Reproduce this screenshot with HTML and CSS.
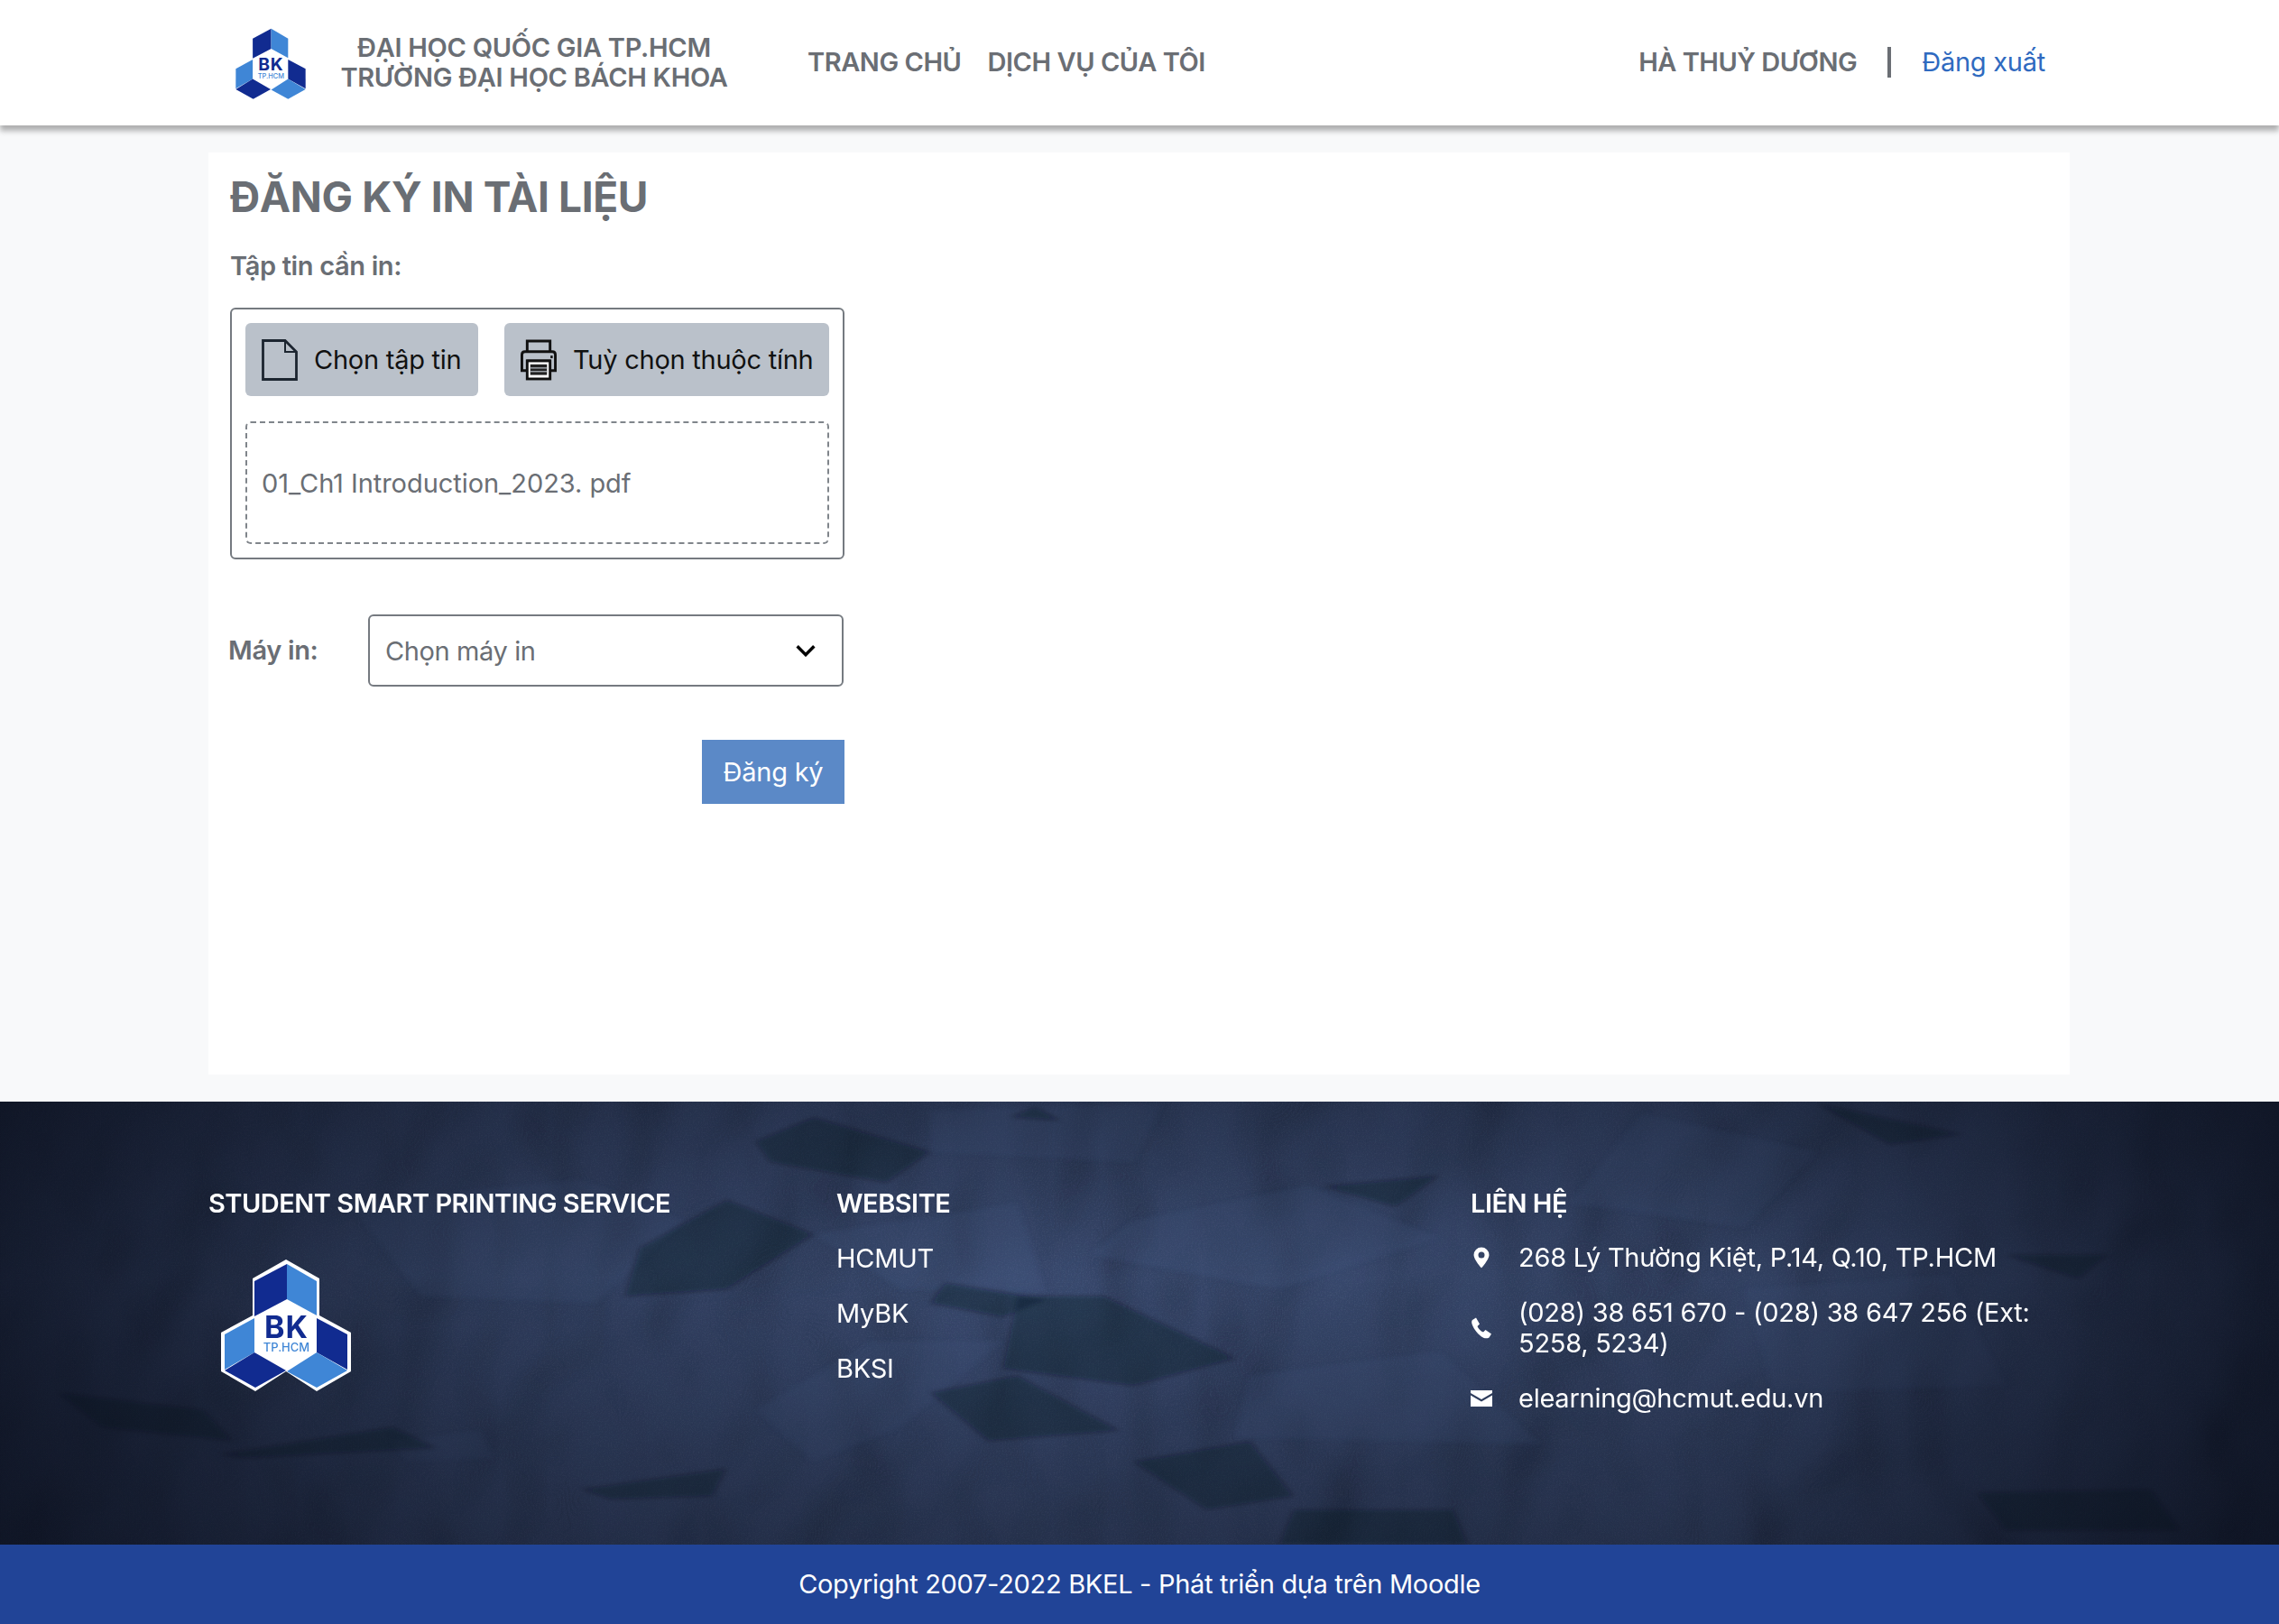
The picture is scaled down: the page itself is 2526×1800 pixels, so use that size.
FILE: index.html
```html
<!DOCTYPE html>
<html lang="vi">
<head>
    <meta charset="UTF-8">
    <meta name="viewport" content="width=device-width, initial-scale=1.0">
    <title>Đăng ký in tài liệu</title>
    <link rel="stylesheet" href="styles.css">
</head>
<body>
    <svg class="svg-defs" width="0" height="0">
        <defs>
            <symbol id="bk-logo" viewBox="0 0 144 146">
                <polygon points="72,0 109,21 109,62 144,81 144,124 106,146 72,124 38,146 0,124 0,81 35,62 35,21" fill="#fff"/>
                <polygon points="73,5 73,44 37,63 37,24" fill="#112b90"/>
                <polygon points="73,5 106,24 106,62 73,44" fill="#3f86d6"/>
                <polygon points="37,65 37,103 4,122 4,83" fill="#3f86d6"/>
                <polygon points="106,65 140,83 140,122 106,103" fill="#112b90"/>
                <polygon points="37,103 72,123 38,142 4,123" fill="#112b90"/>
                <polygon points="106,103 140,123 106,142 73,124" fill="#3f86d6"/>
                <text x="72.500" y="87" class="logo-bk" text-anchor="middle">BK</text>
                <text x="72.500" y="102" class="logo-city" text-anchor="middle">TP.HCM</text>
            </symbol>
        </defs>
    </svg>

    <header class="site-header">
        <div class="brand">
            <svg class="brand-logo"><use href="#bk-logo"/></svg>
            <div class="brand-name">ĐẠI HỌC QUỐC GIA TP.HCM<br>TRƯỜNG ĐẠI HỌC BÁCH KHOA</div>
        </div>
        <nav class="main-nav">
            <a>TRANG CHỦ</a>
            <a>DỊCH VỤ CỦA TÔI</a>
        </nav>
        <div class="user-box">
            <span class="user-name">HÀ THUỶ DƯƠNG</span>
            <span class="user-sep"></span>
            <a class="logout">Đăng xuất</a>
        </div>
    </header>

    <main class="page">
        <section class="card">
            <h1>ĐĂNG KÝ IN TÀI LIỆU</h1>
            <div class="field-label">Tập tin cần in:</div>
            <div class="file-box">
                <div class="file-actions">
                    <button class="tool-btn btn-file">
                        <svg class="tool-icon" viewBox="0 0 40 46" fill="none" stroke="#1c2530" stroke-width="2.800">
                            <path d="M1.500 1.500H26L38.500 14V44.500H1.500Z"/>
                            <path d="M26 1.500V14H38.500" stroke-width="2"/>
                        </svg>
                        Chọn tập tin
                    </button>
                    <button class="tool-btn btn-props">
                        <svg class="tool-icon" viewBox="0 0 41 46">
                            <path d="M7.500 13V1.500H33.500V13" fill="none" stroke="#111" stroke-width="3"/>
                            <path d="M5 13.500H36Q39.500 13.500 39.500 17V35H33V24H8V35H1.500V17Q1.500 13.500 5 13.500Z" fill="none" stroke="#111" stroke-width="3"/>
                            <rect x="7.500" y="24" width="26" height="20.500" fill="#fff" stroke="#111" stroke-width="3"/>
                            <rect x="11" y="28" width="19" height="12" fill="#222"/>
                            <rect x="11" y="31.500" width="19" height="1.200" fill="#bac1ca"/>
                            <rect x="11" y="35.500" width="19" height="1.200" fill="#bac1ca"/>
                            <rect x="34" y="18" width="2.500" height="3" fill="#111"/>
                        </svg>
                        Tuỳ chọn thuộc tính
                    </button>
                </div>
                <div class="file-list">01_Ch1 Introduction_2023. pdf</div>
            </div>
            <div class="printer-row">
                <label class="field-label">Máy in:</label>
                <div class="select-box">
                    <span>Chọn máy in</span>
                    <svg class="select-arrow" viewBox="0 0 20 12" fill="none" stroke="#000" stroke-width="3"><path d="M2 2l8 8 8-8"/></svg>
                </div>
            </div>
            <div class="submit-row">
                <button class="submit-btn">Đăng ký</button>
            </div>
        </section>
    </main>

    <footer class="site-footer">
        <!-- crumpled paper: lit noise, then hand placed facets on top -->
        <svg class="paper" width="2526" height="491">
            <filter id="crumple" x="0" y="0" width="100%" height="100%">
                <feTurbulence type="fractalNoise" baseFrequency="0.0045 0.004" numOctaves="3" seed="8"/>
                <feDiffuseLighting surfaceScale="34" diffuseConstant="1" lighting-color="#3c4f76">
                    <feDistantLight azimuth="200" elevation="60"/>
                </feDiffuseLighting>
            </filter>
            <filter id="grain" x="0" y="0" width="100%" height="100%">
                <feTurbulence type="fractalNoise" baseFrequency="0.7" numOctaves="2" seed="4"/>
                <feColorMatrix values="0 0 0 0 0.55  0 0 0 0 0.65  0 0 0 0 0.85  0 0 0 1.1 -0.5"/>
            </filter>
            <rect width="2526" height="491" filter="url(#crumple)"/>
            <rect width="2526" height="491" filter="url(#grain)" opacity="0.2"/>
        </svg>
        <svg class="paper" viewBox="0 55 1568 1286" preserveAspectRatio="none">
            <filter id="soft" x="-5%" y="-5%" width="110%" height="110%">
                <feGaussianBlur stdDeviation="2 5"/>
            </filter>
            <g class="facets-light" filter="url(#soft)">
                <polygon points="560,440 700,350 720,610 620,600"/>
                <polygon points="240,350 400,280 470,400 410,640 290,620"/>
                <polygon points="780,400 900,300 990,450 880,600 750,500"/>
                <polygon points="600,750 690,750 620,1000 560,1100 520,950"/>
                <polygon points="860,850 990,780 1060,1050 850,1030"/>
                <polygon points="640,80 800,60 780,230 640,200"/>
                <polygon points="1130,90 1250,200 1200,420 1080,350"/>
                <polygon points="270,1040 330,1010 340,1090 280,1100"/>
                <polygon points="1200,600 1340,560 1380,880 1220,900"/>
            </g>
            <g class="facets-dark" filter="url(#soft)">
                <polygon points="520,170 560,100 640,200 610,290 530,230"/>
                <polygon points="700,620 760,620 850,800 780,880 690,830"/>
                <polygon points="430,620 500,600 560,440 500,340 440,480"/>
                <polygon points="650,580 720,630 690,680 640,640"/>
                <polygon points="780,1100 860,1040 890,1200 830,1240"/>
                <polygon points="400,1180 500,1120 490,1200 420,1210"/>
                <polygon points="150,1080 270,1000 300,1060 170,1090"/>
                <polygon points="890,1240 1000,1240 1010,1340 880,1340"/>
                <polygon points="1250,60 1350,150 1300,180"/>
                <polygon points="910,300 990,270 960,360"/>
                <polygon points="1380,500 1450,500 1430,570"/>
                <polygon points="640,900 700,850 770,1010 680,1040"/>
                <polygon points="40,900 140,950 160,1040 70,1000"/>
                <polygon points="1360,1190 1480,1180 1500,1300 1380,1300"/>
                <polygon points="695,100 730,110 712,70"/>
            </g>
        </svg>
        <div class="paper-shade"></div>
        <div class="footer-main">
            <div class="footer-col col-brand">
                <h3>STUDENT SMART PRINTING SERVICE</h3>
                <svg class="footer-logo"><use href="#bk-logo"/></svg>
            </div>
            <div class="footer-col col-links">
                <h3>WEBSITE</h3>
                <a>HCMUT</a>
                <a>MyBK</a>
                <a>BKSI</a>
            </div>
            <div class="footer-col col-contact">
                <h3>LIÊN HỆ</h3>
                <div class="contact-row">
                    <svg class="contact-icon" viewBox="0 0 24 24" fill="#fff"><path fill-rule="evenodd" d="M12 .5a8.500 8.500 0 0 0-8.500 8.500c0 5 8.500 14.500 8.500 14.500S20.500 14 20.500 9A8.500 8.500 0 0 0 12 .5Zm0 5a3.500 3.500 0 1 1 0 7 3.500 3.500 0 0 1 0-7Z"/></svg>
                    <span>268 Lý Thường Kiệt, P.14, Q.10, TP.HCM</span>
                </div>
                <div class="contact-row">
                    <svg class="contact-icon" viewBox="0 0 24 24" fill="#fff"><path d="M2 3 6 .5l4 7L7.500 10c1 2.500 3.500 5.500 6.500 6.500l2.500-2.500 6.500 4.500-2.500 4c-2.500 1.500-5.500 1-8.500-1C7 18 3 12 1.500 7.500 1 5.500 1 4 2 3Z"/></svg>
                    <span>(028) 38 651 670 - (028) 38 647 256 (Ext: 5258, 5234)</span>
                </div>
                <div class="contact-row">
                    <svg class="contact-icon" viewBox="0 0 24 24" fill="#fff"><path d="M0 3h24v3L12 13 0 6Z"/><path d="M0 8.500 12 15.500l12-7V21H0Z"/></svg>
                    <span>elearning@hcmut.edu.vn</span>
                </div>
            </div>
        </div>
        <div class="copyright">Copyright 2007-2022 BKEL - Phát triển dựa trên Moodle</div>
    </footer>
</body>
</html>
```

FILE: styles.css
```css
* {
    box-sizing: border-box;
}
html, body {
    margin: 0;
    padding: 0;
}
body {
    font-family: Inter, "Noto Sans", sans-serif;
    font-size: 29px;
    letter-spacing: -0.25px;
    color: #6a6e74;
    background-color: #f8f9fa;
    width: 2526px;
    height: 1800px;
    overflow: hidden;
}
a {
    text-decoration: none;
}
button {
    font-family: inherit;
    letter-spacing: inherit;
    border: none;
}
.svg-defs {
    position: absolute;
}
.logo-bk {
    font-family: Inter, sans-serif;
    font-weight: 700;
    font-size: 34px;
    letter-spacing: 1px;
    fill: #112b90;
}
.logo-city {
    font-family: Inter, sans-serif;
    font-weight: 500;
    font-size: 13px;
    letter-spacing: 0;
    fill: #3f86d6;
}

.site-header {
    display: flex;
    align-items: center;
    height: 139px;
    padding: 0 259px 2px 259px;
    background: #fff;
    box-shadow: 0 6px 6px rgba(0, 0, 0, 0.3);
    position: relative;
    z-index: 2;
}
.brand {
    display: flex;
    align-items: center;
}
.brand-logo {
    width: 82px;
    height: 83px;
    margin-top: 3px;
}
.brand-name {
    width: 470px;
    margin-left: 16px;
    text-align: center;
    font-size: 29px;
    line-height: 33px;
    font-weight: 600;
    letter-spacing: -0.3px;
}
.main-nav {
    display: flex;
    gap: 29px;
    margin-left: 68px;
    font-weight: 600;
    letter-spacing: -0.45px;
}
.main-nav a {
    color: #6a6e74;
}
.user-box {
    display: flex;
    align-items: center;
    margin-left: auto;
}
.user-name {
    font-weight: 600;
    letter-spacing: -0.5px;
}
.user-sep {
    width: 4px;
    height: 34px;
    margin: 0 34px;
    background: #6a6e74;
}
.logout {
    color: #2f6ac0;
}

.page {
    height: 1082px;
    padding: 30px 232px 30px 231px;
}
.card {
    height: 100%;
    padding: 19px 24px;
    background: #fff;
}
.card h1 {
    margin: 0 0 29px;
    font-size: 46px;
    line-height: 60px;
    font-weight: 700;
    letter-spacing: -0.35px;
}
.field-label {
    font-weight: 600;
    line-height: 36px;
    letter-spacing: -0.35px;
}
.file-box {
    width: 681px;
    height: 279px;
    margin-top: 28px;
    padding: 15px;
    border: 2px solid #757a80;
    border-radius: 6px;
}
.file-actions {
    display: flex;
    justify-content: space-between;
}
.tool-btn {
    display: flex;
    align-items: center;
    gap: 18px;
    height: 81px;
    padding: 0 17px 0 18px;
    border-radius: 6px;
    background: #bac1ca;
    color: #111;
    font-size: 29px;
}
.btn-file {
    width: 258px;
}
.btn-props {
    width: 360px;
}
.tool-icon {
    width: 40px;
    height: 46px;
    flex: none;
}
.file-list {
    display: flex;
    align-items: center;
    height: 136px;
    margin-top: 28px;
    padding: 0 16px;
    border: 2px dashed #80858b;
    border-radius: 6px;
    letter-spacing: -0.05px;
}
.printer-row {
    display: flex;
    align-items: center;
    width: 682px;
    margin: 61px 0 0 -2px;
}
.printer-row .field-label {
    width: 155px;
    flex: none;
}
.select-box {
    display: flex;
    align-items: center;
    justify-content: space-between;
    width: 527px;
    height: 80px;
    padding: 0 28px 0 17px;
    border: 2px solid #757a80;
    border-radius: 6px;
    letter-spacing: -0.4px;
}
.select-arrow {
    width: 24px;
    height: 14px;
}
.submit-row {
    display: flex;
    justify-content: flex-end;
    width: 681px;
    margin-top: 59px;
}
.submit-btn {
    width: 158px;
    height: 71px;
    background: #5b89c7;
    color: #fff;
    font-size: 29px;
}

.site-footer {
    position: relative;
    height: 579px;
    overflow: hidden;
    color: #fff;
    background: #1a2a46;
}
.paper {
    position: absolute;
    top: 0;
    left: 0;
    width: 2526px;
    height: 491px;
}
.facets-light polygon {
    fill: #4a6390;
    opacity: 0.22;
}
.facets-dark polygon {
    fill: #0b1222;
    opacity: 0.32;
}
.paper-shade {
    position: absolute;
    top: 0;
    left: 0;
    width: 2526px;
    height: 491px;
    background:
        linear-gradient(to right, rgba(8, 12, 24, 0.75), rgba(8, 12, 24, 0.2) 22%, rgba(8, 12, 24, 0) 45%, rgba(8, 12, 24, 0.12) 75%, rgba(8, 12, 24, 0.75)),
        linear-gradient(to bottom, rgba(8, 12, 24, 0.35), rgba(8, 12, 24, 0.05) 40%, rgba(8, 12, 24, 0.4));
}
.footer-main {
    position: relative;
    display: flex;
    height: 491px;
    padding: 95px 0 0 231px;
}
.footer-col h3 {
    margin: 0;
    font-size: 29px;
    line-height: 36px;
    font-weight: 600;
    letter-spacing: -0.5px;
}
.col-brand {
    width: 696px;
}
.footer-logo {
    display: block;
    width: 144px;
    height: 146px;
    margin: 44px 0 0 14px;
}
.col-links {
    width: 703px;
}
.col-links a {
    display: block;
    margin-top: 25px;
    line-height: 36px;
    color: #fff;
}
.col-contact {
    width: 640px;
}
.col-contact h3 {
    margin-bottom: -2px;
}
.contact-row {
    display: flex;
    align-items: center;
    margin-top: 27px;
    line-height: 34px;
}
.contact-icon {
    width: 24px;
    height: 24px;
    flex: none;
    margin-right: 29px;
}
.copyright {
    position: relative;
    height: 88px;
    line-height: 88px;
    text-align: center;
    background: #214497;
    letter-spacing: -0.3px;
}
```
